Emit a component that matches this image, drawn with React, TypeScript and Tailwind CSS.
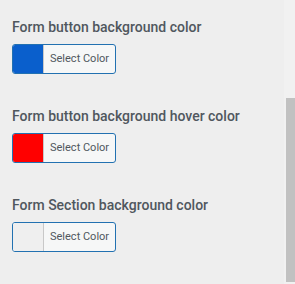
const FIELDS = [
  { label: 'Form button background color', color: '#0a5fcc' },
  { label: 'Form button background hover color', color: '#ff0000' },
  { label: 'Form Section background color', color: '#efefef' },
];

function ColorButton({ color }: { color: string }) {
  return (
    <button className="flex h-[30px] w-[104px] overflow-hidden rounded-[3px] border border-[#2271b1] bg-[#f6f7f7]">
      <span className="h-full w-[31px] shrink-0 border-r border-[#c8c8c8]" style={{ background: color }} />
      <span className="flex flex-1 items-center pl-[6px] text-[11px] text-[#50575e] font-['Roboto',sans-serif]">
        Select Color
      </span>
    </button>
  );
}

export default function App() {
  return (
    <div className="flex h-[284px] w-[295px] overflow-hidden bg-[#eeeeee] font-['Roboto',sans-serif]">
      <div className="flex flex-1 flex-col gap-[32px] pl-3 pt-[17px]">
        {FIELDS.map((f) => (
          <div key={f.label} className="flex flex-col gap-[7px]">
            <div className="h-5 text-[14px] font-medium leading-5 text-[#50575e]">{f.label}</div>
            <ColorButton color={f.color} />
          </div>
        ))}
      </div>
      {/* scrollbar */}
      <div className="flex w-[11px] flex-col bg-[#f1f1f1] pl-[2px] pt-[98px] pb-[2px]">
        <div className="flex-1 bg-[#c1c1c1]" />
      </div>
    </div>
  );
}
